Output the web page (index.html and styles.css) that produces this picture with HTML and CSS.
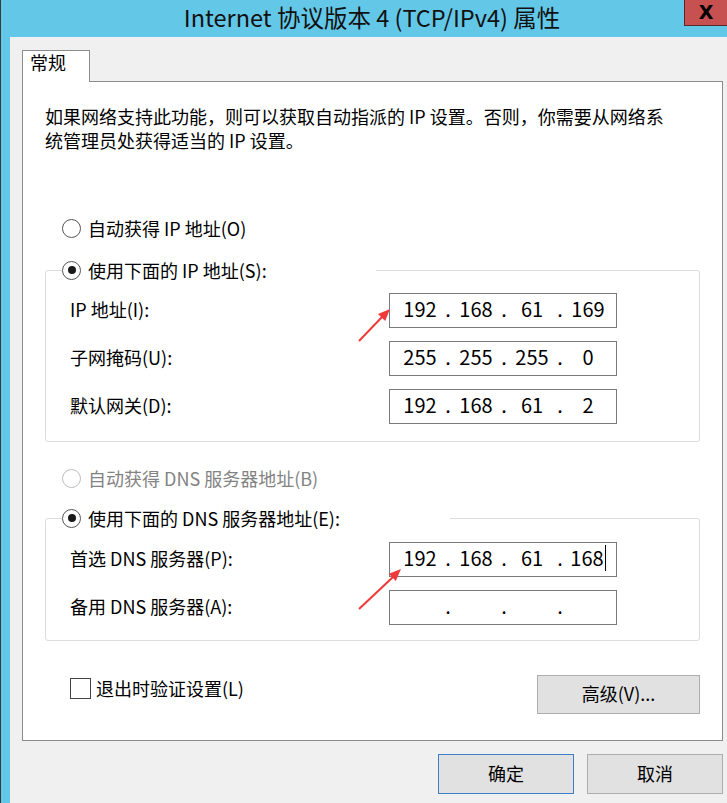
FILE: index.html
```html
<!DOCTYPE html>
<html lang="zh-CN">
<head>
    <meta charset="UTF-8">
    <title>Internet 协议版本 4 (TCP/IPv4) 属性</title>
    <link rel="stylesheet" href="styles.css">
</head>
<body>
    <div class="window">
        <div class="titlebar">
            <div class="title">Internet 协议版本 4 (TCP/IPv4) 属性</div>
            <div class="close">X</div>
        </div>

        <div class="client">
            <div class="tabs">
                <div class="tab">常规</div>
            </div>

            <div class="panel">
                <p class="intro">如果网络支持此功能，则可以获取自动指派的 IP 设置。否则，你需要从网络系<br>统管理员处获得适当的 IP 设置。</p>

                <div class="radio-row first">
                    <span class="radio"></span>
                    <span>自动获得 IP 地址(O)</span>
                </div>

                <fieldset class="group ip-group">
                    <legend class="radio-row legend-ip">
                        <span class="radio checked"></span>
                        <span>使用下面的 IP 地址(S):</span>
                    </legend>
                    <div class="fields">
                        <label>IP 地址(I):</label>
                        <div class="ipbox">
                            <span class="octet">192</span><span class="dot">.</span><span class="octet">168</span><span class="dot">.</span><span class="octet">61</span><span class="dot">.</span><span class="octet">169</span>
                        </div>
                        <label>子网掩码(U):</label>
                        <div class="ipbox">
                            <span class="octet">255</span><span class="dot">.</span><span class="octet">255</span><span class="dot">.</span><span class="octet">255</span><span class="dot">.</span><span class="octet">0</span>
                        </div>
                        <label>默认网关(D):</label>
                        <div class="ipbox">
                            <span class="octet">192</span><span class="dot">.</span><span class="octet">168</span><span class="dot">.</span><span class="octet">61</span><span class="dot">.</span><span class="octet">2</span>
                        </div>
                    </div>
                </fieldset>

                <div class="radio-row dns-auto disabled">
                    <span class="radio"></span>
                    <span>自动获得 DNS 服务器地址(B)</span>
                </div>

                <fieldset class="group dns-group">
                    <legend class="radio-row legend-dns">
                        <span class="radio checked"></span>
                        <span>使用下面的 DNS 服务器地址(E):</span>
                    </legend>
                    <div class="fields">
                        <label>首选 DNS 服务器(P):</label>
                        <div class="ipbox">
                            <span class="octet">192</span><span class="dot">.</span><span class="octet">168</span><span class="dot">.</span><span class="octet">61</span><span class="dot">.</span><span class="octet">168<span class="caret"></span></span>
                        </div>
                        <label>备用 DNS 服务器(A):</label>
                        <div class="ipbox">
                            <span class="octet"></span><span class="dot">.</span><span class="octet"></span><span class="dot">.</span><span class="octet"></span><span class="dot">.</span><span class="octet"></span>
                        </div>
                    </div>
                </fieldset>

                <div class="bottom-row">
                    <div class="check-row">
                        <span class="checkbox"></span>
                        <span>退出时验证设置(L)</span>
                    </div>
                    <button class="btn advanced">高级(V)...</button>
                </div>
            </div>

            <div class="footer">
                <button class="btn default">确定</button>
                <button class="btn">取消</button>
            </div>
        </div>
    </div>

    <!-- annotation arrows drawn over the dialog -->
    <svg class="arrows" width="727" height="803" viewBox="0 0 727 803">
        <line x1="359" y1="341" x2="382" y2="317" stroke="#f03a3a" stroke-width="2"/>
        <polygon points="390,309 385.2,321.1 378,314.1" fill="#f03a3a"/>
        <line x1="359" y1="609" x2="393" y2="577" stroke="#f03a3a" stroke-width="2"/>
        <polygon points="401,569 395.8,580.9 388.9,573.7" fill="#f03a3a"/>
    </svg>
</body>
</html>
```

FILE: styles.css
```css
body {
    margin: 0;
    width: 727px;
    height: 803px;
    overflow: hidden;
    position: relative;
    background-color: #f0f0f0;
    font-family: "Noto Sans CJK SC", "Noto Sans", sans-serif;
    font-size: 18px;
    color: #000;
}
.window {
    height: 803px;
    border-left: 1px solid #3a3a3a;
    display: flex;
    flex-direction: column;
}
.titlebar {
    height: 37px;
    flex-shrink: 0;
    background-color: #63c8e8;
    display: flex;
    align-items: flex-start;
}
.title {
    flex: 1;
    padding-left: 59px;
    text-align: center;
    font-size: 23.5px;
    line-height: 34px;
    color: #111;
    white-space: nowrap;
}
.close {
    width: 42px;
    height: 25px;
    background-color: #c75050;
    border-left: 1px solid #5a2a2a;
    border-bottom: 1px solid #5a2a2a;
    font-family: "DejaVu Sans", sans-serif;
    font-weight: bold;
    font-size: 19px;
    line-height: 24px;
    text-align: center;
    color: #000;
}
.client {
    flex: 1;
    border-left: 9px solid #63c8e8;
    padding: 13px 4px 0 12px;
}
.tabs {
    height: 31px;
    display: flex;
}
.tab {
    position: relative;
    z-index: 1;
    width: 68px;
    height: 32px;
    padding-left: 7px;
    box-sizing: border-box;
    background-color: #fff;
    border: 1px solid #8c8c8c;
    border-bottom: none;
    line-height: 22px;
}
.panel {
    height: 660px;
    box-sizing: border-box;
    background-color: #fff;
    border: 1px solid #8c8c8c;
    padding: 22px 22px 0 22px;
}
.intro {
    margin: 0;
    line-height: 24px;
    white-space: nowrap;
}
.radio-row {
    display: flex;
    align-items: center;
    gap: 7px;
    height: 24px;
    line-height: 24px;
    white-space: nowrap;
}
.radio-row.first {
    margin-top: 64px;
    padding-left: 17px;
}
.radio {
    width: 17px;
    height: 17px;
    border: 1px solid #555;
    border-radius: 50%;
    background-color: #fff;
    display: flex;
    align-items: center;
    justify-content: center;
    flex-shrink: 0;
}
.radio.checked::after {
    content: "";
    width: 8px;
    height: 8px;
    border-radius: 50%;
    background-color: #1a1a1a;
}
.disabled {
    color: #838383;
}
.disabled .radio {
    border-color: #bcbcbc;
}
.group {
    margin: 0;
    padding: 0;
    border: 1px solid #dcdcdc;
    border-radius: 3px;
    min-width: 0;
}
.group legend {
    padding: 0;
    margin-left: 16px;
}
.ip-group {
    margin-top: 18px;
}
.legend-ip {
    width: 314px;
}
.legend-dns {
    width: 388px;
}
.fields {
    display: grid;
    grid-template-columns: 319px 228px;
    row-gap: 13px;
    align-items: center;
    padding: 11px 0 17px 24px;
}
.dns-group .fields {
    padding: 12px 0 15px 24px;
}
.fields label {
    line-height: 24px;
    padding-bottom: 3px;
    white-space: nowrap;
}
.ipbox {
    height: 35px;
    box-sizing: border-box;
    border: 1px solid #7a7a7a;
    padding: 0 0 4px 8px;
    display: flex;
    align-items: center;
    font-size: 20px;
    line-height: 24px;
}
.octet {
    width: 44px;
    text-align: center;
}
.dot {
    width: 12px;
    text-align: center;
}
.caret {
    display: inline-block;
    width: 1px;
    height: 26px;
    margin-left: 1px;
    vertical-align: -5px;
    background-color: #000;
}
.dns-auto {
    margin-top: 24px;
    padding-left: 17px;
}
.dns-group {
    margin-top: 16px;
}
.bottom-row {
    margin-top: 34px;
    display: flex;
    align-items: flex-start;
}
.check-row {
    margin-top: 1px;
    padding-left: 25px;
    display: flex;
    align-items: center;
    gap: 5px;
    line-height: 24px;
    white-space: nowrap;
}
.checkbox {
    width: 19px;
    height: 19px;
    border: 1px solid #444;
    background-color: #fff;
}
.btn {
    font-family: inherit;
    font-size: 18px;
    color: #000;
    background-color: #e1e1e1;
    border: 1px solid #adadad;
    padding: 0 0 3px;
    width: 136px;
    height: 40px;
}
.btn.advanced {
    margin-left: auto;
    width: 163px;
    height: 39px;
}
.btn.default {
    border-color: #3c7fc4;
}
.footer {
    margin-top: 13px;
    display: flex;
    justify-content: flex-end;
    gap: 13px;
}
.arrows {
    position: absolute;
    top: 0;
    left: 0;
    pointer-events: none;
}
```
